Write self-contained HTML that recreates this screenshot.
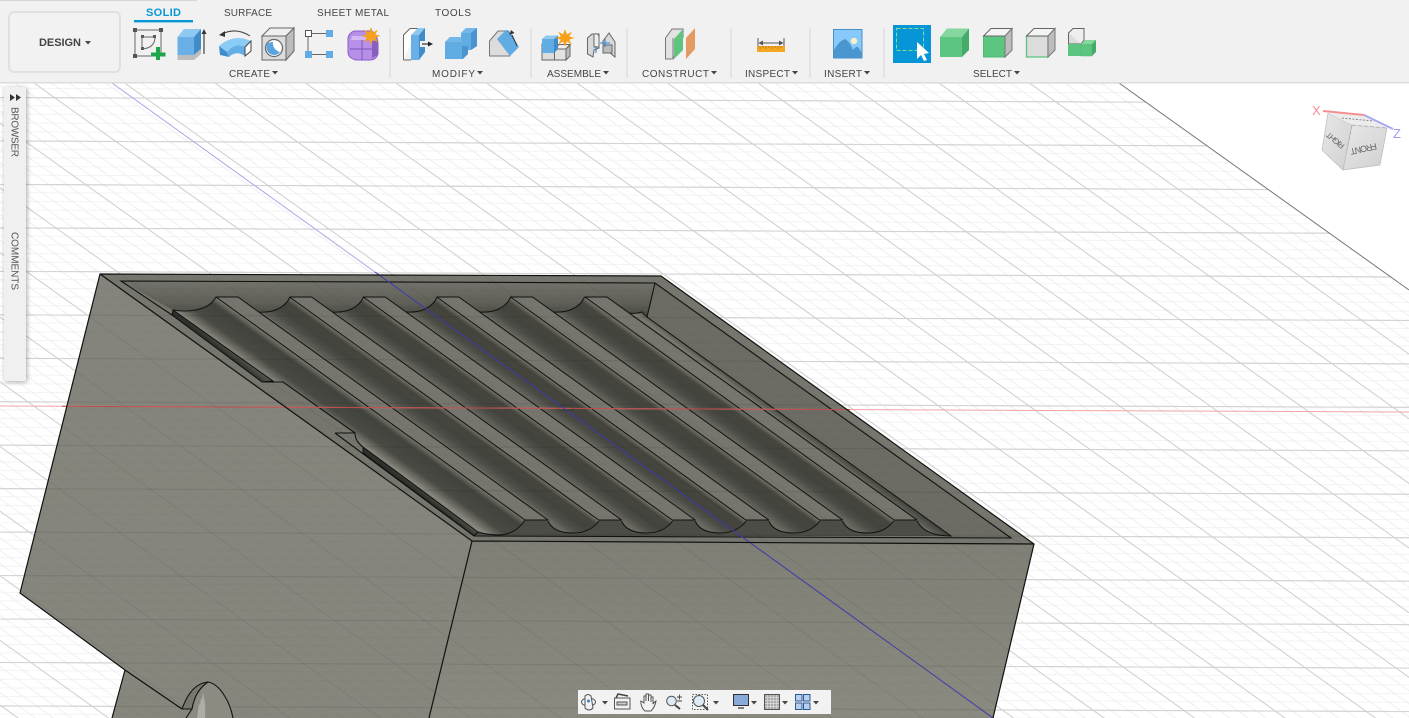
<!DOCTYPE html>
<html><head><meta charset="utf-8"><title>Design</title>
<style>
html,body{margin:0;padding:0;background:#fff;width:1409px;height:718px;overflow:hidden}
svg{display:block;position:absolute;left:0;top:0}
text{font-family:"Liberation Sans",sans-serif}
#panel{position:absolute;left:4px;top:87px;width:22px;height:294px;background:#f0f0f0;box-shadow:1px 1px 5px rgba(0,0,0,.35);border-radius:1px}
</style></head><body>
<svg width="1409" height="718" viewBox="0 0 1409 718" xmlns="http://www.w3.org/2000/svg">
<defs>
<pattern id="grid" patternUnits="userSpaceOnUse" width="91" height="43.7" patternTransform="matrix(1 .004 1.4 1 1144.9 101.5)">
<g stroke="#f4f4f4" stroke-width="1" fill="none">
<path d="M0 8.74H91M0 17.48H91M0 26.22H91M0 34.96H91"/>
</g>
<g stroke="#efefef" stroke-width="1.7" fill="none">
<path d="M18.2 0V43.7M36.4 0V43.7M54.6 0V43.7M72.8 0V43.7"/>
</g>
<path d="M0 .6H91" stroke="#d4d4d4" stroke-width="1.2"/>
<path d="M.9 0V43.7" stroke="#cfcfcf" stroke-width="1.8"/>
</pattern>
<pattern id="grid2" patternUnits="userSpaceOnUse" width="91" height="43.7" patternTransform="matrix(1 .004 1.4 1 1144.9 101.5)">
<g stroke="#000" stroke-opacity=".025" fill="none">
<path d="M0 8.74H91M0 17.48H91M0 26.22H91M0 34.96H91"/>
</g>
<g stroke="#000" stroke-opacity=".025" stroke-width="1.7" fill="none">
<path d="M18.2 0V43.7M36.4 0V43.7M54.6 0V43.7M72.8 0V43.7"/>
</g>
<path d="M0 .6H91" stroke="#000" stroke-opacity=".08" stroke-width="1.2"/>
<path d="M.9 0V43.7" stroke="#000" stroke-opacity=".06" stroke-width="1.8"/>
</pattern>
<clipPath id="gclip"><path d="M0 83H1119L1409 290V718H0Z"/></clipPath>
<clipPath id="bclip"><path d="M100 274L661 276L1034 544L993 718H429H112L125 670L20 593Z"/></clipPath>
<linearGradient id="fl" x1="0" y1="0" x2="0" y2="1"><stop offset="0" stop-color="#84847c"/><stop offset="1" stop-color="#86867d"/></linearGradient>
<linearGradient id="fr" x1="0" y1="0" x2="0" y2="1"><stop offset="0" stop-color="#7f7f76"/><stop offset="1" stop-color="#8a8a80"/></linearGradient>
<linearGradient id="back" gradientUnits="userSpaceOnUse" x1="0" y1="283" x2="0" y2="316"><stop offset="0" stop-color="#71716a"/><stop offset=".6" stop-color="#606059"/><stop offset="1" stop-color="#484842"/></linearGradient>
<linearGradient id="g1" gradientUnits="userSpaceOnUse" x1="312" y1="410" x2="332.8" y2="381.1"><stop offset="0" stop-color="#8c8c84"/><stop offset=".12" stop-color="#72726a"/><stop offset=".34" stop-color="#4a4a44"/><stop offset=".8" stop-color="#43433d"/><stop offset=".94" stop-color="#686860"/><stop offset="1" stop-color="#7e7e75"/></linearGradient>
<linearGradient id="g2" gradientUnits="userSpaceOnUse" x1="400" y1="413.5" x2="417.8" y2="388.8"><stop offset="0" stop-color="#6a6a62"/><stop offset=".26" stop-color="#4e4e48"/><stop offset=".5" stop-color="#44443e"/><stop offset=".82" stop-color="#46463f"/><stop offset=".95" stop-color="#6c6c64"/><stop offset="1" stop-color="#7e7e75"/></linearGradient>
<linearGradient id="g7" gradientUnits="userSpaceOnUse" x1="780" y1="422" x2="786" y2="414"><stop offset="0" stop-color="#78786f"/><stop offset=".5" stop-color="#5a5a52"/><stop offset="1" stop-color="#45453f"/></linearGradient>
<linearGradient id="wall" gradientUnits="userSpaceOnUse" x1="218" y1="348" x2="222" y2="343"><stop offset="0" stop-color="#2f2f2b"/><stop offset="1" stop-color="#55554f"/></linearGradient>
<linearGradient id="wall2" gradientUnits="userSpaceOnUse" x1="418" y1="492" x2="422" y2="487"><stop offset="0" stop-color="#2f2f2b"/><stop offset="1" stop-color="#55554f"/></linearGradient>
<linearGradient id="cube" x1="0" y1="0" x2="1" y2="1"><stop offset="0" stop-color="#e8e8e8"/><stop offset="1" stop-color="#d0d0d0"/></linearGradient>
<g id="groove">
<path d="M238 297L259 312C273 313 285 308 290 297L599 521Q590 533 573 533Q553 533 548 521Z" fill="url(#g2)"/>
<path d="M259 312C273 313 285 308 290 297M548 521Q553 533 573 533Q590 533 599 521" fill="none" stroke="#111" stroke-width="1"/>
</g>
<path id="ridge" d="M216 297H238L548 520H525Z" fill="#76766e" stroke="#111" stroke-width="1" stroke-linejoin="round"/>
<path id="star" d="M0-9L2-3.5L7-6.5L4.2-1.6L9.5 0L4.2 1.6L7 6.5L2 3.5L0 9L-2 3.5L-7 6.5L-4.2 1.6L-9.5 0L-4.2-1.6L-7-6.5L-2-3.5Z" fill="#f7a11a"/>
</defs>

<rect width="1409" height="718" fill="#fff"/>
<rect width="1409" height="718" fill="url(#grid)" clip-path="url(#gclip)"/>
<path d="M1119 83L1409 290" stroke="#777" stroke-width="1"/>

<!-- body faces -->
<path d="M100 274L472 541L429 718H112L125 670L20 593Z" fill="url(#fl)"/>
<path d="M472 541L1034 544L993 718H429Z" fill="url(#fr)"/>
<path d="M100 274L661 276L1034 544L472 541Z" fill="#76766e"/>
<!-- cavity -->
<path d="M121 281L655 283L647 317L173 310Z" fill="url(#back)"/>
<path d="M655 283L1011 538L951 537L647 317Z" fill="#6c6c64"/>
<path d="M470 520H917L945 536L474 536Z" fill="#4d4d47"/>
<!-- grooves -->
<path d="M173 310C185 312 208 312 216 297L525 520Q516 534 500 535Q488 535 478 532L363 447L355 433L283 382L273 381Z" fill="url(#g1)"/>
<path d="M173 310C185 312 208 312 216 297M525 520Q516 534 500 535Q488 535 478 532" fill="none" stroke="#111" stroke-width="1"/>
<use href="#groove"/>
<use href="#groove" x="73.6"/>
<use href="#groove" x="147.2"/>
<use href="#groove" x="220.8"/>
<use href="#groove" x="294.6"/>
<path d="M607 298L628 313Q636 314 642 312L647 317L951 536Q925 536 917 521Z" fill="url(#g7)"/>
<path d="M628 313Q636 314 642 312L647 317L951 536Q925 536 917 521" fill="none" stroke="#111" stroke-width="1"/>
<use href="#ridge"/>
<use href="#ridge" x="73.6"/>
<use href="#ridge" x="147.2"/>
<use href="#ridge" x="220.8"/>
<use href="#ridge" x="294.6"/>
<use href="#ridge" x="369"/>
<!-- left ledges -->
<path d="M262 382H283L355 433H335Z" fill="#76766e"/>
<path d="M262 382H283L355 433" fill="none" stroke="#111" stroke-width="1.1"/>
<path d="M335 433H355Q355 441 363 447V453Z" fill="#76766e"/>
<path d="M335 433H355Q355 441 363 447" fill="none" stroke="#111" stroke-width="1.1"/>
<!-- side walls of the left step -->
<path d="M173 310L172 315L262 382L273 381Z" fill="url(#wall)" stroke="#111" stroke-width="1"/>
<path d="M363 447L478 532L474 536L363 453Z" fill="url(#wall2)" stroke="#111" stroke-width="1"/>
<!-- cavity outline -->
<path d="M172 315L121 281L655 283L1011 538L474 536L335 433M655 283L647 317" fill="none" stroke="#111" stroke-width="1.1"/>
<!-- grid over body -->
<rect width="1409" height="718" fill="url(#grid2)" clip-path="url(#bclip)"/>
<!-- axes -->
<path d="M0 406L1409 412" stroke="#f2a5a5" stroke-width="1"/>
<path d="M62 406.3L850 409.6" stroke="#bb4a4a" stroke-width="1"/>
<path d="M112 83L375 272" stroke="#a9a9ea" stroke-width="1"/>
<path d="M375 272L993 718" stroke="#3c3ca8" stroke-width="1"/>
<ellipse cx="566" cy="408" rx="8" ry="3" fill="none" stroke="#333" stroke-opacity=".5"/>
<!-- body outline -->
<path d="M125 670L20 593L100 274L661 276L1034 544L993 718M100 274L472 541L1034 544M472 541L429 718M125 670L112 718M125 670L182 709" fill="none" stroke="#111" stroke-width="1.2" stroke-linejoin="round"/>
<!-- lower part -->
<path d="M182 709C187 695 195 683 208 682C220 684 230 702 233 718H186L192 709Z" fill="#8b8b82"/>
<path d="M182 709L192 709C194 697 199 688 208 682C196 683 187 695 182 709Z" fill="#77776f"/>
<path d="M197 718L199 704L200 705L201 698L202 700L203 692Q206 705 205 718Z" fill="#aeaea6"/>
<path d="M182 709C187 695 195 683 208 682C220 684 230 702 233 718M182 709H192C194 697 199 688 208 682M192 709L186 718" fill="none" stroke="#111" stroke-width="1.1"/>

<!-- TOOLBAR -->
<rect width="1409" height="82" fill="#f1f1f1"/>
<rect y="82" width="1409" height="1.5" fill="#dcdcdc"/>
<rect width="197" height="1" fill="#d6d6d6"/>
<rect x="9" y="12" width="111" height="60" rx="5" fill="#f2f2f2" stroke="#e0e0e0" stroke-width="2"/>
<text x="39" y="46" font-size="11" font-weight="bold" fill="#444" textLength="42">DESIGN</text>
<path d="M85 41H91L88 44.5Z" fill="#444"/>
<text x="146" y="16" fill="#0696d7" font-size="11" font-weight="bold" textLength="35">SOLID</text>
<g font-size="10" fill="#444">
<text x="224" y="16" textLength="48">SURFACE</text>
<text x="317" y="16" textLength="72">SHEET METAL</text>
<text x="435" y="16" textLength="36">TOOLS</text>
<text x="229" y="77" textLength="41">CREATE</text>
<text x="432" y="77" textLength="43">MODIFY</text>
<text x="547" y="77" textLength="54">ASSEMBLE</text>
<text x="642" y="77" textLength="67">CONSTRUCT</text>
<text x="745" y="77" textLength="45">INSPECT</text>
<text x="824" y="77" textLength="38">INSERT</text>
<text x="973" y="77" textLength="39">SELECT</text>
</g>
<path d="M272 71h6l-3 3.5zM477 71h6l-3 3.5zM603 71h6l-3 3.5zM711 71h6l-3 3.5zM792 71h6l-3 3.5zM864 71h6l-3 3.5zM1014 71h6l-3 3.5z" fill="#444"/>
<rect x="134" y="20" width="59" height="2.4" fill="#0696d7"/>
<path d="M390 28V78M531 28V78M627 28V78M731 28V78M810 28V78M884 28V78" stroke="#e0e0e0" stroke-width="1.6"/>

<!-- sketch -->
<rect x="135" y="30" width="26" height="26" fill="none" stroke="#666"/>
<path d="M133 28h4v4h-4zM159 28h4v4h-4zM133 54h4v4h-4zM141 35h3v3h-3zM153 35h3v3h-3zM141 47h3v3h-3z" fill="#555"/>
<path d="M142 37H154M142 37V48M155 37Q155 48 142 49" fill="none" stroke="#666"/>
<path d="M156 47h4v5.500h5.500v4H160V60h-4v-3.500h-5v-4h5z" fill="#1fa64b"/>
<!-- extrude -->
<path d="M177.500 55V37H194V55Z" fill="#6ab0e6"/><path d="M177.500 37L184 29H201L194 37Z" fill="#8fc8f0"/><path d="M194 37L201 29V49L194 55Z" fill="#3f8cc8"/>
<path d="M177.500 55H194L201 49V54L194 60H177.500Z" fill="#bdbdbd"/>
<path d="M204 54V33" stroke="#333" stroke-width="1.100"/><path d="M201.500 34L204 29L206.500 34Z" fill="#333"/>
<!-- revolve -->
<path d="M222 34Q236 27 250 36" fill="none" stroke="#444"/><path d="M219 35L225 31L225 37Z" fill="#333"/>
<path d="M219 46Q234 33 251 41L245 47Q235 42 227 52Z" fill="#8accf6"/>
<path d="M219 46L227 52L229 57L220 55Z" fill="#3f8cc8"/>
<path d="M227 52Q235 42 245 47V56Q236 50 229 57Z" fill="#64ade6"/>
<path d="M245 47L251 41V51L245 56Z" fill="#fff" stroke="#444"/>
<!-- hole -->
<path d="M262 36H286V60H262Z" fill="#dcdcdc" stroke="#666"/><path d="M262 36L270 28H294L286 36Z" fill="#efefef" stroke="#666"/><path d="M286 36L294 28V51L286 60Z" fill="#bcbcbc" stroke="#666"/>
<circle cx="274" cy="48" r="8.500" fill="#fff" stroke="#666" stroke-width="1.200"/>
<path d="M268 43A7 7 0 0 0 280 52A9 9 0 0 1 273 42Q270 42 268 43Z" fill="#5aa5e0"/>
<!-- rect pattern -->
<path d="M311 33.500H326M308 37V52M311 54.500H326" stroke="#666"/>
<rect x="305.500" y="30.500" width="6" height="6" fill="#fff" stroke="#555"/>
<rect x="326" y="30" width="7" height="7" fill="#62ace4"/><rect x="305" y="51" width="7" height="7" fill="#62ace4"/><rect x="326" y="51" width="7" height="7" fill="#62ace4"/>
<!-- form -->
<path d="M354 31H372Q378 36 378 44V54Q376 60 370 60H356Q348 58 348 52V38Q349 33 354 31Z" fill="#b78fe8" stroke="#8a5cc8"/>
<path d="M352 36H372L369 40H351Z" fill="#d2b8f4"/>
<path d="M350 49H372M362 40V60" stroke="#7e53b8" stroke-width=".9"/>
<path d="M372 41L378 40V55L372 58Z" fill="#8660bc"/>
<use href="#star" x="371" y="36"/>
<!-- press pull -->
<path d="M403.500 60V35L410 28.500H418" fill="#fff" stroke="#666"/><path d="M403.500 60H411" stroke="#666"/>
<path d="M411 35H419V60H411Z" fill="#6ab0e6"/><path d="M411 35L418 28H425L419 35Z" fill="#8fc8f0"/><path d="M419 35L425 28V52L419 60Z" fill="#3f8cc8"/>
<rect x="420" y="41" width="13" height="6" fill="#f1f1f1"/>
<path d="M422 44H429" stroke="#222" stroke-width="1.100"/><path d="M428 41.500L433 44L428 46.500Z" fill="#222"/>
<!-- combine -->
<path d="M445 42L450 37H461V33L466 28H477V46L471 50H468V54L463 59H445Z" fill="#62ace4"/>
<path d="M461 33L466 28H477L471 33Z" fill="#74b8ea"/>
<path d="M471 33L477 28V46L471 50Z" fill="#4a94d0"/>
<path d="M445 42L450 37H461L462 42Z" fill="#74b8ea"/>
<path d="M462 46L468 46V54L462 59Z" fill="#4a94d0"/>
<!-- chamfer -->
<path d="M489.500 41L498 31H507L501 38L512 50L510 56H489.500Z" fill="#dcdcdc" stroke="#777"/>
<path d="M497 39L506 30L519 47L510 56Z" fill="#62ace4"/><path d="M506 30L509 31L519 47Z" fill="#3f8cc8"/>
<path d="M512 35L517 46" stroke="#333"/><path d="M509.500 35L511 30L514.500 33Z" fill="#333"/>
<!-- new component -->
<path d="M542 44H556V60H542Z" fill="#dcdcdc" stroke="#666"/><path d="M554.500 49H566V60H554.500Z" fill="#e2e2e2" stroke="#666"/><path d="M566 49L570 45V56L566 60Z" fill="#bcbcbc" stroke="#666"/><path d="M554.500 49L559 44.500H570L566 49Z" fill="#efefef" stroke="#666"/>
<path d="M542 39H554V53H542Z" fill="#62ace4"/><path d="M542 39L546 35.500H558L554 39Z" fill="#8fc8f0"/><path d="M554 39L558 35.500V49L554 53Z" fill="#3f8cc8"/>
<use href="#star" x="565" y="38"/>
<!-- joint -->
<path d="M587.500 38L592 34H599V48L594 50L593 57L587.500 54Z" fill="#d8d8d8" stroke="#666"/>
<path d="M594 34Q599 33 599 37V47H594Z" fill="#eee" stroke="#666"/>
<path d="M603 41L609 33L615 42V57L609 52L603 53Z" fill="#d8d8d8" stroke="#666"/>
<path d="M603 45H612V53H603Z" fill="#bdbdbd" stroke="#666"/>
<path d="M596 46V53M605 39V47M600 43H610" stroke="#2b86d2" stroke-width="1.100"/>
<!-- construct -->
<path d="M665.500 38L672 29H683V37L673 59H665.500Z" fill="#e2e2e2" stroke="#777"/>
<path d="M674 39L683 29V50L674 59Z" fill="#5fc47e"/><path d="M673 38V59" stroke="#777"/>
<path d="M686 38L695 28V49L686 59Z" fill="#e39a63"/>
<!-- inspect -->
<path d="M758 38V48M784 38V48M759 43H783" stroke="#555"/><path d="M758.500 43L763 40.500V45.500ZM783.500 43L779 40.500V45.500Z" fill="#555"/>
<rect x="757" y="46" width="28" height="6" fill="#f5a623"/>
<path d="M760 46v3M763 46v2M766 46v3M769 46v2M772 46v3M775 46v2M778 46v3M781 46v2" stroke="#a86f10" stroke-width=".7"/>
<!-- insert -->
<rect x="833.500" y="29.500" width="28.500" height="28.500" fill="#88c9fb" stroke="#4a90c8"/>
<path d="M834 50Q839 41 845 39Q850 42 853 50Q856 46 858 47L862 53V58H834Z" fill="#4a96d0"/>
<circle cx="854" cy="41" r="3.200" fill="#f8f1c6"/>
<!-- select -->
<rect x="893" y="25" width="38" height="38" fill="#0696d7"/>
<rect x="896.500" y="28.500" width="27" height="22" fill="none" stroke="#7ee08f" stroke-dasharray="4 2"/>
<path d="M917 42V59L921 55L924 61L927 60L924 54L929 53Z" fill="#fff"/>
<path d="M940 37H962V57H940Z" fill="#5cc580"/><path d="M940 37L947 28.500H969L962 37Z" fill="#85d69f"/><path d="M962 37L969 28.500V50L962 57Z" fill="#45ab68"/>
<path d="M983.500 36H1005V57H983.500Z" fill="#5cc580" stroke="#4fb873"/><path d="M983.500 36L991 28.500H1012L1005 36Z" fill="#f4f4f4" stroke="#666"/><path d="M1005 36L1012 28.500V50L1005 57Z" fill="#bdbdbd" stroke="#777"/>
<path d="M1026.500 36H1048V57H1026.500Z" fill="#dcdcdc" stroke="#5cc580" stroke-width="1.300"/><path d="M1026.500 36L1034 28.500H1055L1048 36Z" fill="#f4f4f4" stroke="#666"/><path d="M1048 36L1055 28.500V50L1048 57Z" fill="#bdbdbd" stroke="#777"/>
<path d="M1068.500 33H1083V44H1068.500Z" fill="#dcdcdc" stroke="#666"/><path d="M1068.500 33L1073 28.500H1084V40L1081 44" fill="#eee" stroke="#666"/>
<path d="M1068 44H1081V56H1068Z" fill="#5cc580"/><path d="M1081 44H1092V56H1081Z" fill="#5cc580" stroke="#4fb873" stroke-width=".6"/><path d="M1081 44L1085 40H1096L1092 44Z" fill="#85d69f"/><path d="M1092 44L1096 40V52L1092 56Z" fill="#45ab68"/>

<!-- viewcube -->
<path d="M1328 113L1352 125L1343 170L1322 150Z" fill="url(#cube)" stroke="#bbb" stroke-width=".7"/>
<path d="M1352 125L1387 128L1380 165L1343 170Z" fill="url(#cube)" stroke="#bbb" stroke-width=".7"/>
<path d="M1328 113L1364 115L1387 128L1352 125Z" fill="#ececec"/>
<path d="M1342 118L1373 121" stroke="#888" stroke-dasharray="2 1.500"/>
<path d="M1352 125L1387 128M1352 125L1347 150" stroke="#aaa" stroke-width=".8" stroke-dasharray="4 2" fill="none"/>
<path d="M1323 111L1364 115" stroke="#f58f8f" stroke-width="2"/><path d="M1364 115L1393 129" stroke="#a9a9f5" stroke-width="2"/>
<text x="1312" y="115" font-size="13" fill="#f58f8f">X</text><text x="1393" y="138" font-size="13" fill="#9a9af5">Z</text>
<text transform="translate(1376 143) rotate(167.500)" font-size="9" fill="#666" textLength="27">FRONT</text>
<text transform="translate(1345 145) rotate(-140)" font-size="8" fill="#666" textLength="21">RIGHT</text>

<!-- bottom nav -->
<rect x="578" y="690" width="253" height="24" fill="#f2f2f2"/>
<g fill="none" stroke="#555" stroke-width="1">
<ellipse cx="588.500" cy="702" rx="7" ry="4"/><path d="M585 696Q588 693 591 696L593 708Q589 712 585 708Z" fill="#f2f2f2"/>
<path d="M614.500 698H630V709H614.500Z"/><path d="M617 702H627V705H617Z" fill="#ccc"/><path d="M616 698L618 694L628 696" stroke="#444" stroke-width="1.500"/>
<path d="M643 709Q640 703 641 701L644 703V696H646V701V694H648.500V701V695H651V702V697H653V704Q654 702 656 701Q655 707 651 711H645Z"/>
<circle cx="671.500" cy="701" r="4.800" fill="#dcecf6"/><path d="M675 705L680 709" stroke="#444" stroke-width="2"/>
<path d="M677 697H682M679.500 694.500V699.500M677 701H682" stroke="#444" stroke-width=".9"/>
<rect x="692.500" y="694.500" width="15" height="15" stroke-dasharray="1.500 1.500"/>
<circle cx="699" cy="701" r="5.500" fill="#dcecf6"/><path d="M703 705L708 710" stroke="#444" stroke-width="2"/>
<rect x="733.500" y="694.500" width="15" height="11" fill="#88aad8" stroke="#333"/><path d="M738 708H744" stroke="#555" stroke-width="1.500"/>
<rect x="764.500" y="694.500" width="15" height="15" fill="#aaa" stroke="#555"/><path d="M767.500 695V709M770.500 695V709M773.500 695V709M776.500 695V709M765 697.500H779M765 700.500H779M765 703.500H779M765 706.500H779" stroke="#ddd" stroke-width=".7"/>
<rect x="795.500" y="694.500" width="6.500" height="6.500" fill="#b8d0ee" stroke="#2c5a96"/><rect x="803.500" y="694.500" width="6.500" height="6.500" fill="#b8d0ee" stroke="#2c5a96"/><rect x="795.500" y="703" width="6.500" height="6.500" fill="#b8d0ee" stroke="#2c5a96"/><rect x="803.500" y="703" width="6.500" height="6.500" fill="#b8d0ee" stroke="#2c5a96"/>
</g>
<circle cx="588.500" cy="701" r="1.500" fill="#2b86d2"/>
<path d="M602 701h6l-3 3.500zM713 701h6l-3 3.500zM751 701h6l-3 3.500zM782 701h6l-3 3.500zM813 701h6l-3 3.500z" fill="#444"/>
</svg>

<div id="panel">
<svg width="22" height="294" viewBox="0 0 22 294" style="position:absolute;left:0;top:0">
<path d="M6 7L11 10.500L6 14ZM12 7L17 10.500L12 14Z" fill="#333"/>
<text transform="translate(7.500 20) rotate(90)" font-size="10" fill="#555" textLength="50">BROWSER</text>
<text transform="translate(7.500 145) rotate(90)" font-size="10" fill="#555" textLength="58">COMMENTS</text>
</svg>
</div>
</body></html>
